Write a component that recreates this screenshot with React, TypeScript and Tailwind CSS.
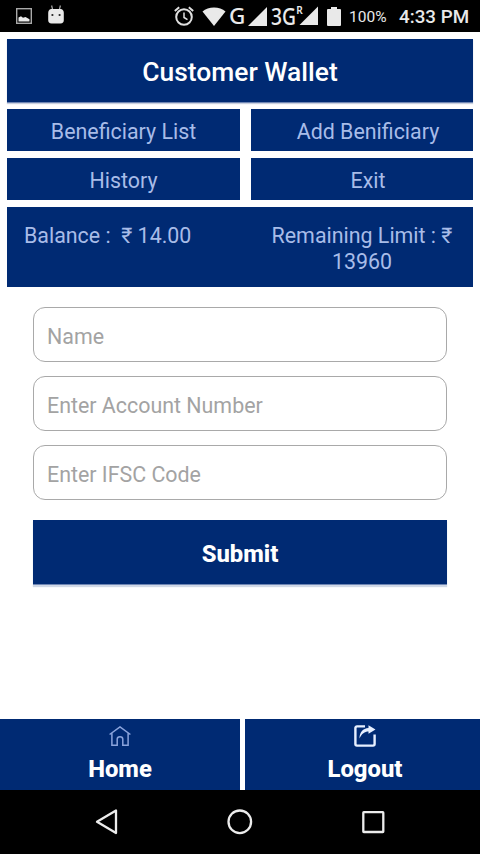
import React, { type JSX } from 'react';

interface FooterItem {
  icon: JSX.Element;
  label: string;
}

const fields = ['Name', 'Enter Account Number', 'Enter IFSC Code'];

const SignalIcon: React.FC = () => (
  <svg className="h-[19px] w-[19px]" viewBox="0 0 19 19" fill="#e9e9e9">
    <path d="M19 0v19H0z" />
  </svg>
);

const StatusBar: React.FC = () => (
  <div className="flex h-8 shrink-0 items-center bg-black pl-4 text-[#e9e9e9]">
    {/* Notifications */}
    <svg className="h-4 w-4" viewBox="0 0 16 16" fill="none">
      <rect x=".7" y=".7" width="14.6" height="14.6" stroke="#a9a9a9" strokeWidth="1.4" />
      <path d="M2.5 13.5V9.6L5 8.2l2 1.6 2.5-.8 4 2.2v2.3z" fill="#e9e9e9" />
    </svg>
    <svg className="mb-[3px] ml-4 h-[19px] w-4" viewBox="0 0 16 19">
      <path d="M3.6.5l1 4M12.4.5l-1 4" stroke="#a9a9a9" strokeWidth="1.2" />
      <path
        d="M3 4h10c2 .6 2.8 2 2.8 4v7c0 2.2-1 3.5-3.3 3.5h-9C1.2 18.5.2 17.2.2 15V8C.2 6 1 4.6 3 4z"
        fill="#e9e9e9"
      />
      <circle cx="4.4" cy="10" r="1.1" fill="#222" />
      <circle cx="11.6" cy="10" r="1.1" fill="#222" />
    </svg>

    {/* Alarm, wifi and mobile signal */}
    <svg className="ml-[110px] h-5 w-5" viewBox="0 0 20 20" fill="none" stroke="#e0e0e0">
      <circle cx="10" cy="11" r="7.8" strokeWidth="2" />
      <path d="M10 6.5v5l3.5 2.2" strokeWidth="1.5" />
      <path d="M.8 5l4.4-3.8M19.2 5l-4.4-3.8" strokeWidth="1.9" />
    </svg>
    <svg className="ml-2 h-[19px] w-6" viewBox="0 0 24 19" fill="#e9e9e9">
      <path d="M12 19L.5 4.6C3.5 2 7.5.5 12 .5s8.5 1.500 11.500 4.100z" />
    </svg>
    <span className="-mt-px ml-[3px] w-[17px] font-['Noto_Sans'] text-[22.5px] leading-8 font-medium">
      G
    </span>
    <div className="ml-[1.5px] flex">
      <SignalIcon />
    </div>
    <svg className="ml-1 h-8 w-[47px]" viewBox="0 0 47 32" fill="#e9e9e9">
      <path d="M47 6.5V25H28.500z" />
      <text x="0" y="25" textLength="25" lengthAdjust="spacingAndGlyphs" className="font-['Noto_Sans'] text-[24px] font-medium">
        3G
      </text>
      <text x="25.2" y="14" textLength="6.5" lengthAdjust="spacingAndGlyphs" className="font-['Noto_Sans'] text-[10.5px] font-semibold">
        R
      </text>
    </svg>
    <svg className="ml-[9.5px] h-[19px] w-[14px]" viewBox="0 0 14 19" fill="#e9e9e9">
      <path d="M4 0h6v2h3a1 1 0 0 1 1 1v15a1 1 0 0 1-1 1H1a1 1 0 0 1-1-1V3a1 1 0 0 1 1-1h3z" />
    </svg>
    <span className="ml-[8px] w-[50px] pt-[3px] text-[15.5px]">100%</span>
    <span className="pt-[3px] text-[18.8px] font-medium whitespace-nowrap">4:33 PM</span>
  </div>
);

const footerItems: FooterItem[] = [
  {
    icon: (
      <svg className="h-5 w-[22px]" viewBox="0 0 22 20" fill="none" stroke="#8ba4dc" strokeWidth="1.5">
        <path d="M.6 8.5L11 .9l10.400 7.600M2.900 7.200v12h5.300v-6c0-3.200 5.600-3.200 5.600 0v6h5.300V7.200" />
      </svg>
    ),
    label: 'Home',
  },
  {
    icon: (
      <svg className="h-[22px] w-[22px]" viewBox="0 0 22 22" fill="none">
        <path
          d="M11 1.400H3a1.600 1.600 0 0 0-1.600 1.600v16A1.600 1.600 0 0 0 3 20.600h16a1.600 1.600 0 0 0 1.600-1.600V9.500"
          stroke="#e6efff"
          strokeWidth="2.4"
        />
        <path d="M14.500.3L21.500 4.400 14.500 8.800V6.400c-4 0-6.500 2-9 7C5.500 7.500 9 3.200 14.500 3z" fill="#e6efff" />
      </svg>
    ),
    label: 'Logout',
  },
];

const App: React.FC = () => {
  return (
    <div className="flex h-[854px] w-[480px] flex-col overflow-hidden bg-white font-[Roboto,sans-serif]">
      <StatusBar />

      <main className="flex-1 px-[7px] pt-[7px]">
        <h1 className="flex h-16 items-center justify-center border-b border-[#6f86b4] bg-[#002a73] pt-[5px] text-[26.4px] font-medium text-white shadow-[0_1px_1px_#c9d0df]">
          Customer Wallet
        </h1>

        {/* Menu */}
        <div className="mt-1.5 grid grid-cols-[233px_222px] gap-x-[11px] gap-y-[7px] text-[21.4px] text-[#a8bce8]">
          <button className="h-[42px] bg-[#002a73] pt-1">Beneficiary List</button>
          <button className="h-[42px] bg-[#002a73] pt-1 pl-3">Add Benificiary</button>
          <button className="h-[42px] bg-[#002a73] pt-1">History</button>
          <button className="h-[42px] bg-[#002a73] pt-1 pl-3">Exit</button>
        </div>

        {/* Balance */}
        <div className="mt-[7px] flex h-20 bg-[#002a73] pt-4 text-[21.4px] leading-[25.5px] text-[#a8bce8]">
          <p className="w-[244px] pl-[17px] whitespace-pre">Balance :  ₹ 14.00</p>
          <p className="w-[222px] px-4 text-center">Remaining Limit : ₹ 13960</p>
        </div>

        {/* Form */}
        <form className="mt-5 flex flex-col gap-3.5 px-[26px]">
          {fields.map((field) => (
            <input
              key={field}
              placeholder={field}
              className="h-[55px] rounded-[12px] border border-[#a9a9a9] px-[13px] pt-[3px] text-[21.4px] placeholder:text-[#a3a3a3]"
            />
          ))}
          <button
            type="button"
            className="mt-1.5 h-[65px] border-b border-[#6f86b4] bg-[#002a73] pt-[5px] text-[23.8px] font-extrabold text-white shadow-[0_2px_1px_#d0d8e6]"
          >
            Submit
          </button>
        </form>
      </main>

      {/* Footer tabs */}
      <footer className="grid h-[71px] grid-cols-[240px_235px] gap-[5px] text-[23.8px] font-extrabold text-white">
        {footerItems.map((item) => (
          <div
            key={item.label}
            className="flex flex-col items-center bg-[#002a73] pt-1.5 last:pl-[5px]"
          >
            <div className="flex h-[22px] items-center">{item.icon}</div>
            <span className="mt-[7px] leading-[30px]">{item.label}</span>
          </div>
        ))}
      </footer>

      {/* System navigation */}
      <nav className="h-16 shrink-0 bg-black">
        <svg className="h-16 w-[480px]" viewBox="0 0 480 64" fill="none" stroke="#ececec" strokeWidth="2.3">
          <path d="M116 20.500v22.500L97 31.800z" strokeLinejoin="round" />
          <circle cx="239.8" cy="31.8" r="11.3" />
          <rect x="363.3" y="22.2" width="20" height="19.8" rx=".5" />
        </svg>
      </nav>
    </div>
  );
};

export default App;
